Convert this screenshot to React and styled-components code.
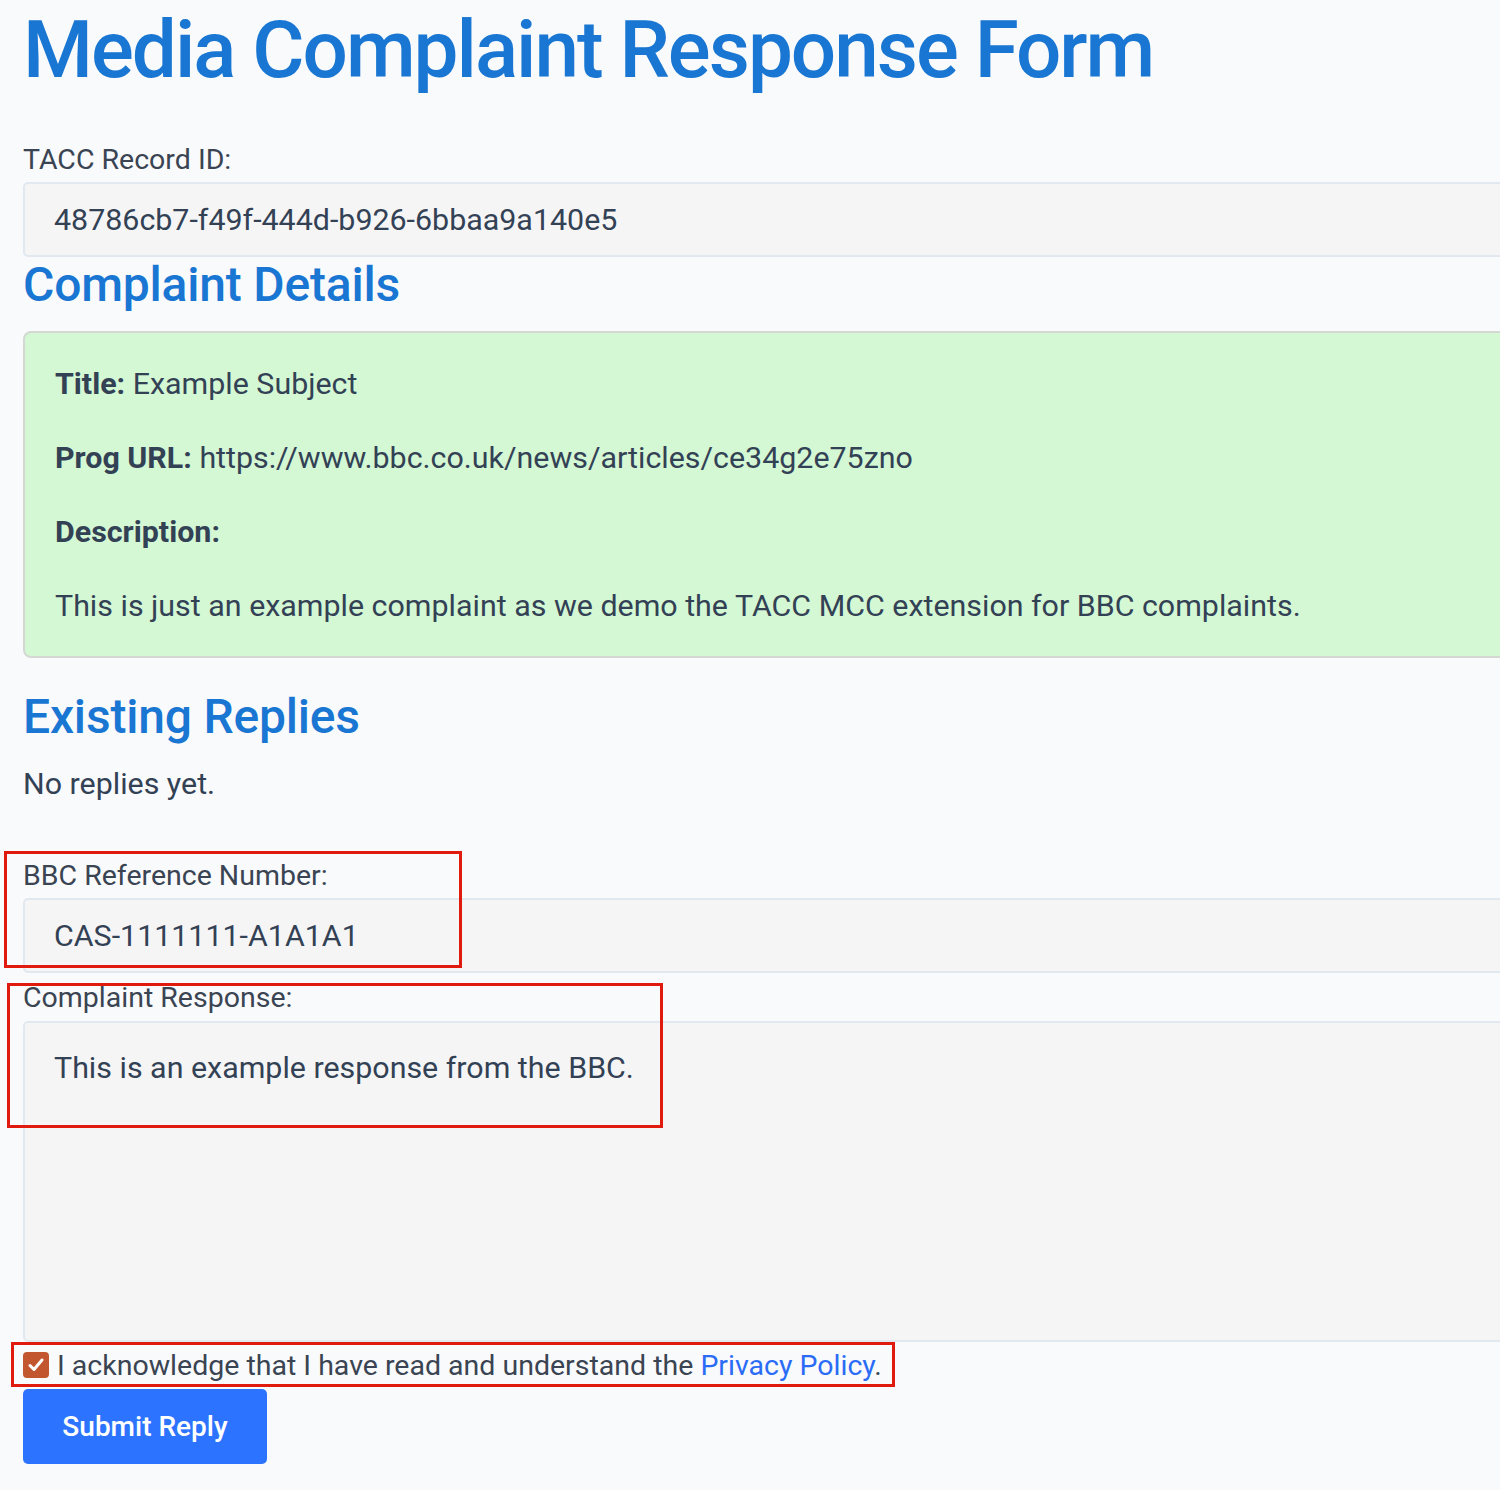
import React from 'react';
import styled, { createGlobalStyle } from 'styled-components';

const GlobalStyle = createGlobalStyle`
  html, body {
    margin: 0;
    padding: 0;
    background: #f8fafc;
    font-family: Roboto, "Liberation Sans", sans-serif;
    overflow-x: hidden;
  }
`;

const Page = styled.div`
  position: relative;
  width: 100%;
  min-height: 1490px;
  overflow: hidden;
`;

const Form = styled.form`
  display: flex;
  flex-direction: column;
  width: 1700px;
  padding-left: 23px;
`;

const PageTitle = styled.h1`
  margin: 2px 0 0;
  font-size: 80px;
  line-height: 96px;
  font-weight: 500;
  letter-spacing: -2px;
  color: #1976d2;
`;

const SectionTitle = styled.h2`
  margin: ${p => p.$top || 0}px 0 0;
  font-size: 48px;
  line-height: 56px;
  font-weight: 500;
  letter-spacing: -0.2px;
  color: #1976d2;
`;

const Label = styled.label`
  display: block;
  margin-top: ${p => p.$top || 0}px;
  font-size: 28.5px;
  line-height: 32px;
  color: #3a4452;
`;

const TextInput = styled.input`
  box-sizing: border-box;
  width: 100%;
  height: 75px;
  margin-top: 6px;
  padding: 0 29px;
  border: 2px solid #e2e8f0;
  border-radius: 5px;
  background: #f5f5f5;
  font-family: inherit;
  font-size: 30.4px;
  color: #334155;
  outline: none;
`;

const TextArea = styled.textarea`
  box-sizing: border-box;
  width: 100%;
  height: 321px;
  margin-top: 7px;
  padding: 23px 29px;
  border: 2px solid #e2e8f0;
  border-radius: 5px;
  background: #f5f5f5;
  font-family: inherit;
  font-size: 30.4px;
  line-height: 44px;
  color: #334155;
  resize: none;
  outline: none;
`;

const DetailsCard = styled.div`
  margin-top: 18px;
  padding: 29px 30px 28px;
  border: 2px solid #d3d8d3;
  border-radius: 8px;
  background: #d4f7d4;
  display: flex;
  flex-direction: column;
  gap: 30px;
`;

const DetailLine = styled.p`
  margin: 0;
  font-size: 30.4px;
  line-height: 44px;
  color: #334155;

  strong {
    font-weight: 700;
  }
`;

const Note = styled.p`
  margin: 22px 0 0;
  font-size: 30.4px;
  line-height: 34px;
  color: #334155;
`;

const AckRow = styled.label`
  display: flex;
  align-items: center;
  gap: 8px;
  height: 36px;
  margin-top: 5px;
  font-size: 28.5px;
  color: #3a4452;
`;

const CheckBox = styled.span`
  display: flex;
  align-items: center;
  justify-content: center;
  width: 26px;
  height: 26px;
  border-radius: 4px;
  background: #c2572f;
  flex-shrink: 0;
`;

const PolicyLink = styled.a`
  color: #2b6cf6;
  text-decoration: none;
`;

const SubmitButton = styled.button`
  align-self: flex-start;
  width: 244px;
  height: 75px;
  margin-top: 6px;
  border: none;
  border-radius: 5px;
  background: #2c74ff;
  color: #fff;
  font-family: inherit;
  font-size: 28px;
  font-weight: 500;
  cursor: pointer;
`;

// red annotation frames drawn over the screenshot
const Highlight = styled.div`
  position: absolute;
  box-sizing: border-box;
  border: 3px solid #e01b0e;
  pointer-events: none;
`;

const highlights = [
  { left: 4, top: 851, width: 458, height: 117 },
  { left: 7, top: 983, width: 656, height: 145 },
  { left: 11, top: 1342, width: 884, height: 45 },
];

const App = () => {
  return (
    <Page>
      <GlobalStyle />
      <Form onSubmit={e => e.preventDefault()}>
        <PageTitle>Media Complaint Response Form</PageTitle>

        <Label $top={46}>TACC Record ID:</Label>
        <TextInput readOnly value="48786cb7-f49f-444d-b926-6bbaa9a140e5" />

        <SectionTitle>Complaint Details</SectionTitle>
        <DetailsCard>
          <DetailLine><strong>Title:</strong> Example Subject</DetailLine>
          <DetailLine><strong>Prog URL:</strong> https://www.bbc.co.uk/news/articles/ce34g2e75zno</DetailLine>
          <DetailLine><strong>Description:</strong></DetailLine>
          <DetailLine>This is just an example complaint as we demo the TACC MCC extension for BBC complaints.</DetailLine>
        </DetailsCard>

        <SectionTitle $top={31}>Existing Replies</SectionTitle>
        <Note>No replies yet.</Note>

        <Label $top={59}>BBC Reference Number:</Label>
        <TextInput readOnly value="CAS-1111111-A1A1A1" />

        <Label $top={9}>Complaint Response:</Label>
        <TextArea readOnly value="This is an example response from the BBC." />

        <AckRow>
          <CheckBox>
            <svg width="18" height="18" viewBox="0 0 18 18">
              <path d="M3 9.5 L7 13.5 L15 4" fill="none" stroke="#fff" strokeWidth="3" strokeLinecap="round" strokeLinejoin="round" />
            </svg>
          </CheckBox>
          <span>
            I acknowledge that I have read and understand the <PolicyLink href="#">Privacy Policy</PolicyLink>.
          </span>
        </AckRow>

        <SubmitButton type="submit">Submit Reply</SubmitButton>
      </Form>

      {highlights.map((h, i) => (
        <Highlight key={i} style={h} />
      ))}
    </Page>
  );
};

export default App;
